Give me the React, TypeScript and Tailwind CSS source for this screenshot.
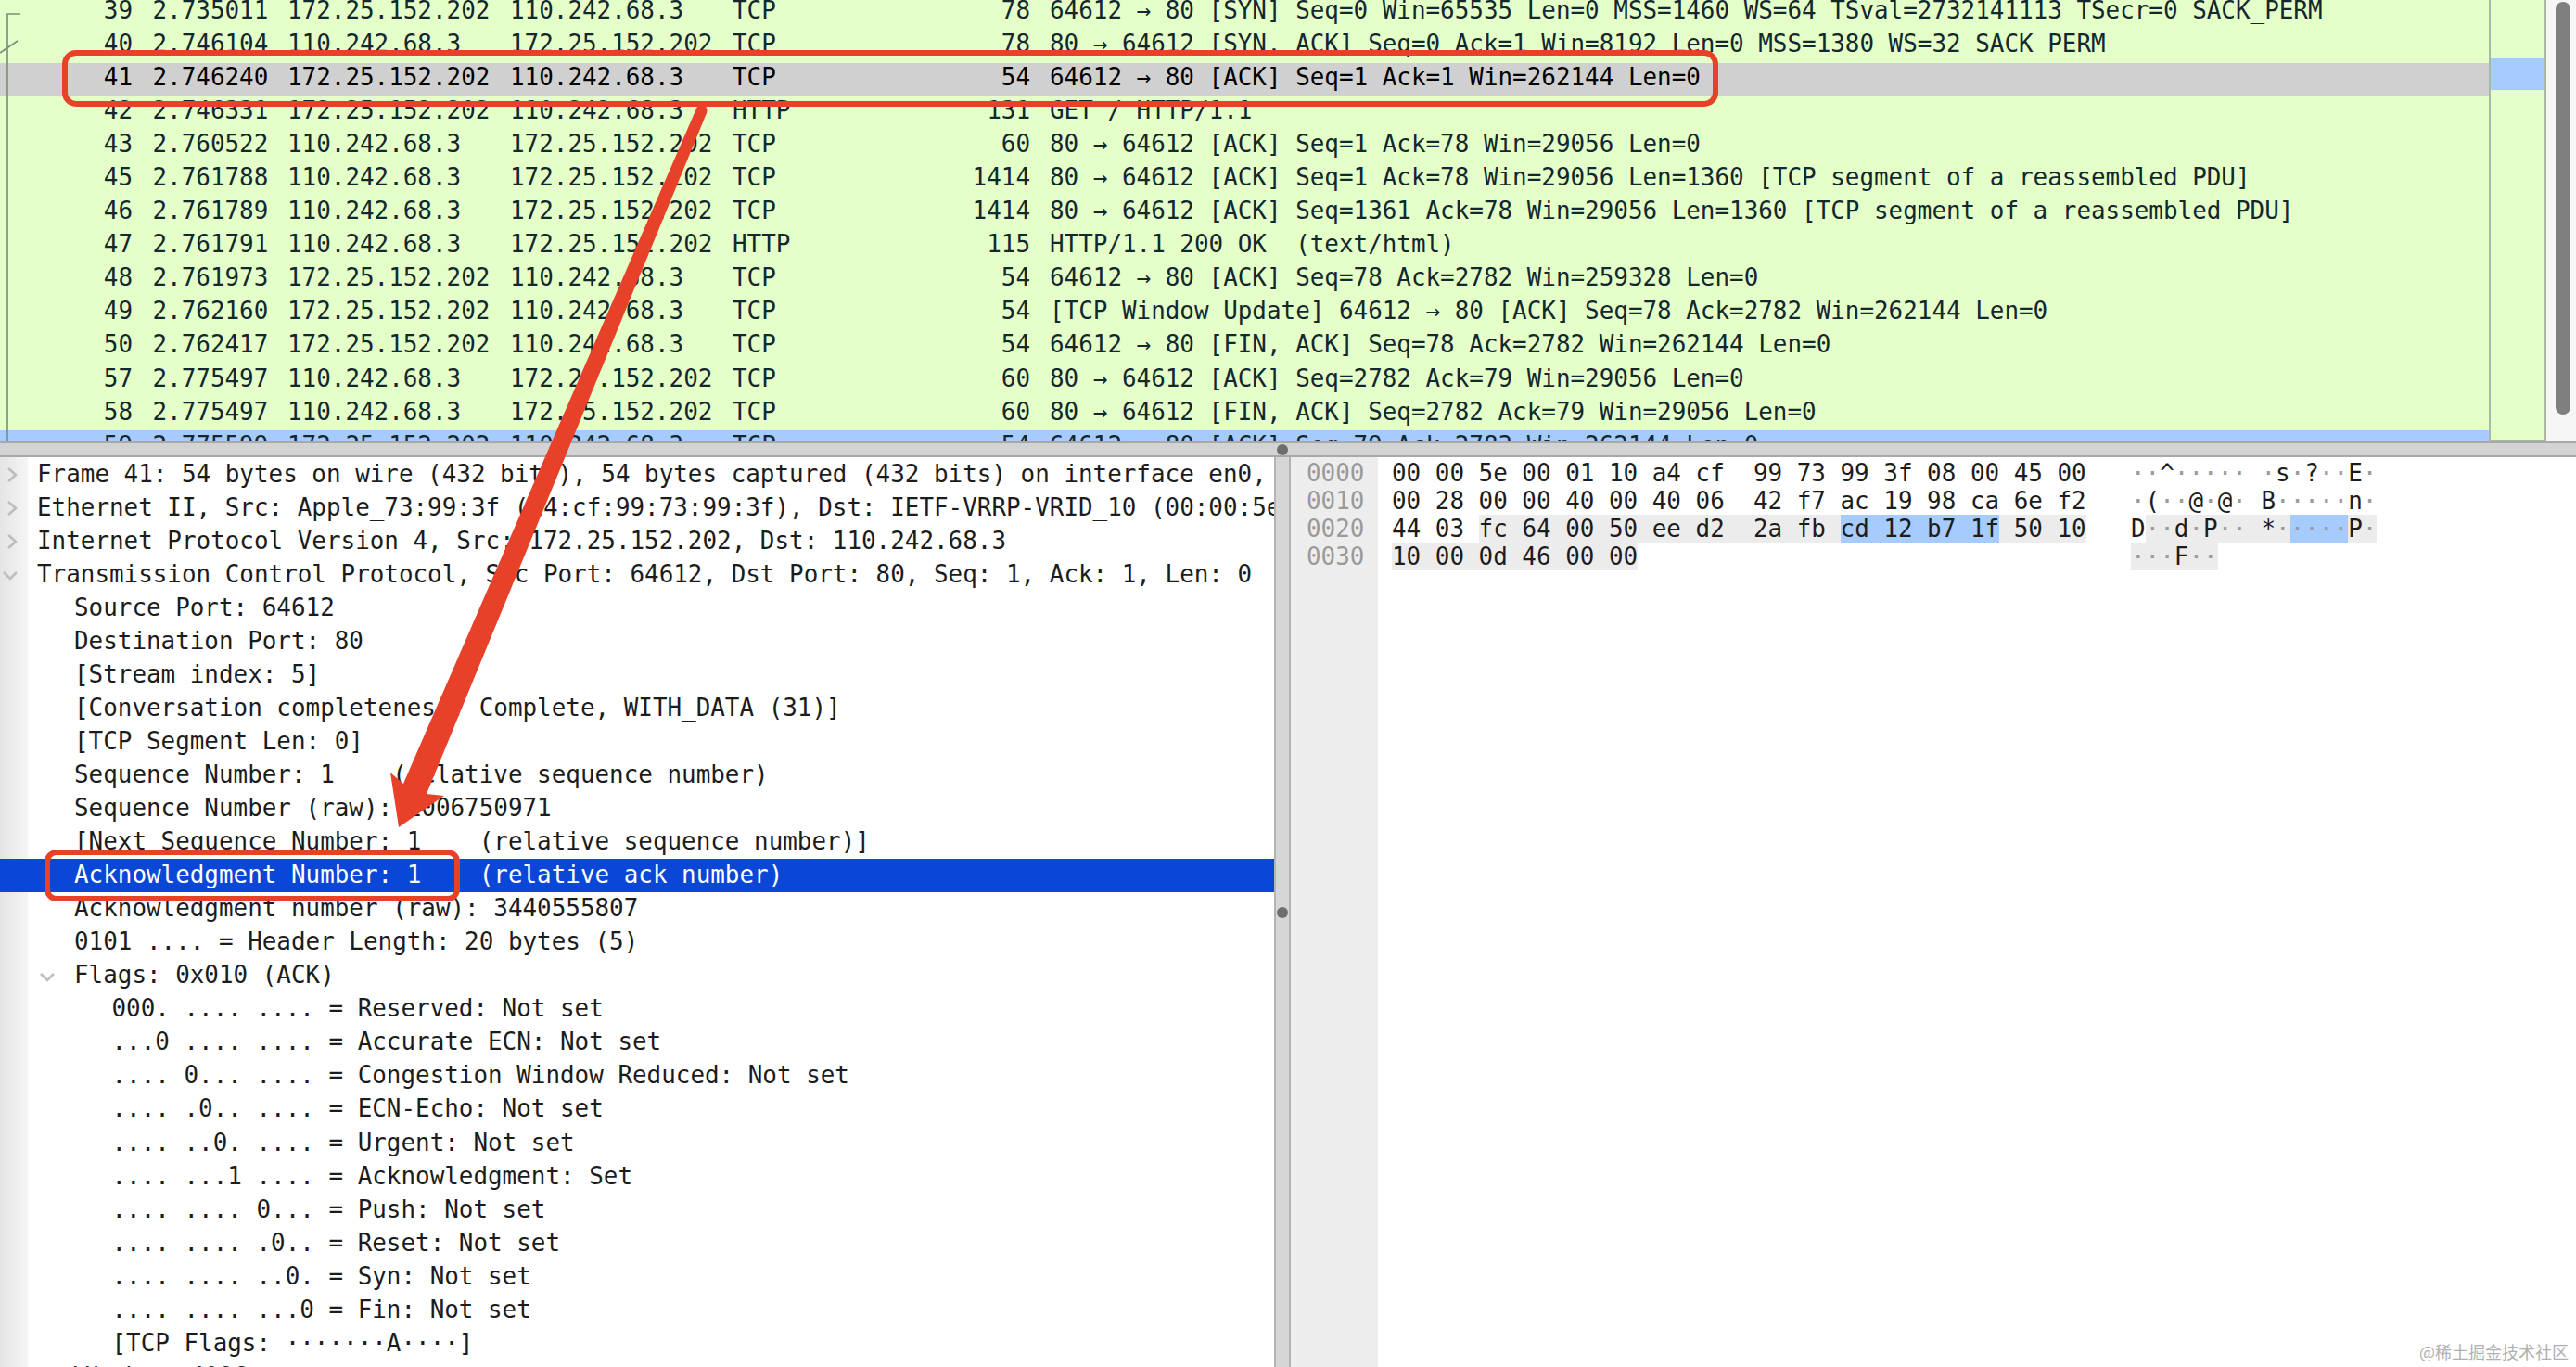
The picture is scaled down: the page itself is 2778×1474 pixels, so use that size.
import React from 'react'

interface Packet {
  no: string
  time: string
  src: string
  dst: string
  proto: string
  len: string
  info: string
  tone?: 'selected' | 'related'
}

const A = '172.25.152.202'
const B = '110.242.68.3'

const packets: Packet[] = [
  { no: '39', time: '2.735011', src: A, dst: B, proto: 'TCP', len: '78', info: '64612 → 80 [SYN] Seq=0 Win=65535 Len=0 MSS=1460 WS=64 TSval=2732141113 TSecr=0 SACK_PERM' },
  { no: '40', time: '2.746104', src: B, dst: A, proto: 'TCP', len: '78', info: '80 → 64612 [SYN, ACK] Seq=0 Ack=1 Win=8192 Len=0 MSS=1380 WS=32 SACK_PERM' },
  { no: '41', time: '2.746240', src: A, dst: B, proto: 'TCP', len: '54', info: '64612 → 80 [ACK] Seq=1 Ack=1 Win=262144 Len=0', tone: 'selected' },
  { no: '42', time: '2.746331', src: A, dst: B, proto: 'HTTP', len: '131', info: 'GET / HTTP/1.1' },
  { no: '43', time: '2.760522', src: B, dst: A, proto: 'TCP', len: '60', info: '80 → 64612 [ACK] Seq=1 Ack=78 Win=29056 Len=0' },
  { no: '45', time: '2.761788', src: B, dst: A, proto: 'TCP', len: '1414', info: '80 → 64612 [ACK] Seq=1 Ack=78 Win=29056 Len=1360 [TCP segment of a reassembled PDU]' },
  { no: '46', time: '2.761789', src: B, dst: A, proto: 'TCP', len: '1414', info: '80 → 64612 [ACK] Seq=1361 Ack=78 Win=29056 Len=1360 [TCP segment of a reassembled PDU]' },
  { no: '47', time: '2.761791', src: B, dst: A, proto: 'HTTP', len: '115', info: 'HTTP/1.1 200 OK  (text/html)' },
  { no: '48', time: '2.761973', src: A, dst: B, proto: 'TCP', len: '54', info: '64612 → 80 [ACK] Seq=78 Ack=2782 Win=259328 Len=0' },
  { no: '49', time: '2.762160', src: A, dst: B, proto: 'TCP', len: '54', info: '[TCP Window Update] 64612 → 80 [ACK] Seq=78 Ack=2782 Win=262144 Len=0' },
  { no: '50', time: '2.762417', src: A, dst: B, proto: 'TCP', len: '54', info: '64612 → 80 [FIN, ACK] Seq=78 Ack=2782 Win=262144 Len=0' },
  { no: '57', time: '2.775497', src: B, dst: A, proto: 'TCP', len: '60', info: '80 → 64612 [ACK] Seq=2782 Ack=79 Win=29056 Len=0' },
  { no: '58', time: '2.775497', src: B, dst: A, proto: 'TCP', len: '60', info: '80 → 64612 [FIN, ACK] Seq=2782 Ack=79 Win=29056 Len=0' },
  { no: '59', time: '2.775599', src: A, dst: B, proto: 'TCP', len: '54', info: '64612 → 80 [ACK] Seq=79 Ack=2783 Win=262144 Len=0', tone: 'related' },
]

// depth: 0 = top level with chevron, 1 = tcp field, 2 = flag bit
const tree: { text: string; depth: number; open?: boolean; selected?: boolean }[] = [
  { text: 'Frame 41: 54 bytes on wire (432 bits), 54 bytes captured (432 bits) on interface en0, id 0', depth: 0 },
  { text: 'Ethernet II, Src: Apple_73:99:3f (a4:cf:99:73:99:3f), Dst: IETF-VRRP-VRID_10 (00:00:5e:00:01:10)', depth: 0 },
  { text: 'Internet Protocol Version 4, Src: 172.25.152.202, Dst: 110.242.68.3', depth: 0 },
  { text: 'Transmission Control Protocol, Src Port: 64612, Dst Port: 80, Seq: 1, Ack: 1, Len: 0', depth: 0, open: true },
  { text: 'Source Port: 64612', depth: 1 },
  { text: 'Destination Port: 80', depth: 1 },
  { text: '[Stream index: 5]', depth: 1 },
  { text: '[Conversation completeness: Complete, WITH_DATA (31)]', depth: 1 },
  { text: '[TCP Segment Len: 0]', depth: 1 },
  { text: 'Sequence Number: 1    (relative sequence number)', depth: 1 },
  { text: 'Sequence Number (raw): 1006750971', depth: 1 },
  { text: '[Next Sequence Number: 1    (relative sequence number)]', depth: 1 },
  { text: 'Acknowledgment Number: 1    (relative ack number)', depth: 1, selected: true },
  { text: 'Acknowledgment number (raw): 3440555807', depth: 1 },
  { text: '0101 .... = Header Length: 20 bytes (5)', depth: 1 },
  { text: 'Flags: 0x010 (ACK)', depth: 1, open: true },
  { text: '000. .... .... = Reserved: Not set', depth: 2 },
  { text: '...0 .... .... = Accurate ECN: Not set', depth: 2 },
  { text: '.... 0... .... = Congestion Window Reduced: Not set', depth: 2 },
  { text: '.... .0.. .... = ECN-Echo: Not set', depth: 2 },
  { text: '.... ..0. .... = Urgent: Not set', depth: 2 },
  { text: '.... ...1 .... = Acknowledgment: Set', depth: 2 },
  { text: '.... .... 0... = Push: Not set', depth: 2 },
  { text: '.... .... .0.. = Reset: Not set', depth: 2 },
  { text: '.... .... ..0. = Syn: Not set', depth: 2 },
  { text: '.... .... ...0 = Fin: Not set', depth: 2 },
  { text: '[TCP Flags: ·······A····]', depth: 2 },
  { text: 'Window: 4096', depth: 1 },
]

type Tone = 'plain' | 'field' | 'hit'
type Seg = [string, Tone]

const offsets = ['0000', '0010', '0020', '0030']

const hexLines: Seg[][] = [
  [['00 00 5e 00 01 10 a4 cf  99 73 99 3f 08 00 45 00', 'plain']],
  [['00 28 00 00 40 00 40 06  42 f7 ac 19 98 ca 6e f2', 'plain']],
  [['44 03 ', 'plain'], ['fc 64 00 50 ee d2  2a fb ', 'field'], ['cd 12 b7 1f', 'hit'], [' 50 10', 'field']],
  [['10 00 0d 46 00 00', 'field']],
]

const asciiLines: Seg[][] = [
  [['··^····· ·s·?··E·', 'plain']],
  [['·(··@·@· B·····n·', 'plain']],
  [['D', 'plain'], ['··d·P·· *·', 'field'], ['····', 'hit'], ['P·', 'field']],
  [['···F··', 'field']],
]

const toneClass: Record<Tone, string> = {
  plain: '',
  field: 'bg-[#ececec]',
  hit: 'bg-[#a5cbff]',
}

const Chevron = ({ open, className }: { open?: boolean; className: string }) => (
  <svg viewBox="0 0 20 20" className={className} fill="none" stroke="#bdbdbd" strokeWidth="2.6">
    {open ? <path d="M3 7l7 7 7-7" /> : <path d="M6 3l8 7-8 7" />}
  </svg>
)

const PacketRow = ({ p }: { p: Packet }) => (
  <div
    className={`grid h-[36.05px] shrink-0 grid-cols-[143px_167px_240px_240px_140px_181px_1fr] items-center pb-[5px] leading-[22px] whitespace-pre text-[#12272e] ${
      p.tone === 'selected' ? 'bg-[#d0d0d0] text-black' : p.tone === 'related' ? 'bg-[#a5cbff]' : ''
    }`}
  >
    <span className="text-right">{p.no}</span>
    <span className="pl-[21.5px]">{p.time}</span>
    <span>{p.src}</span>
    <span>{p.dst}</span>
    <span>{p.proto}</span>
    <span className="text-right">{p.len}</span>
    <span className="pl-[21px]">{p.info}</span>
  </div>
)

const TreeRow = ({ row }: { row: (typeof tree)[number] }) => {
  const indent = row.depth === 2 ? 'pl-[120.5px]' : 'pl-[80px]'
  return (
    <div
      className={`relative flex h-[36.05px] shrink-0 items-center whitespace-pre ${
        row.depth === 0 ? 'pl-[40px]' : indent
      } ${row.selected ? 'bg-[#0a47d6] text-white' : 'text-[#1c1c1c]'}`}
    >
      {row.depth === 0 && (
        <Chevron open={row.open} className={`absolute top-[9px] h-[20px] w-[20px] ${row.open ? 'left-[1px]' : 'left-[3px]'}`} />
      )}
      {row.depth === 1 && row.open && <Chevron open className="absolute top-[9px] left-[41px] h-[20px] w-[20px]" />}
      {row.text}
    </div>
  )
}

const DumpLine = ({ segs, dots }: { segs: Seg[]; dots?: boolean }) => (
  <div className="h-[30px] leading-[30px] whitespace-pre text-[#1c1c1c]">
    {segs.map(([text, tone], i) => (
      <span key={i} className={`inline-block h-[30px] align-top ${toneClass[tone]}`}>
        {dots
          ? text.split('').map((c, j) =>
              c === '·' ? (
                <span key={j} className="text-[#9a9a9a]">
                  {c}
                </span>
              ) : (
                c
              )
            )
          : text}
      </span>
    ))}
  </div>
)

export default function App() {
  return (
    <div className="relative flex h-[1474px] w-[2778px] flex-col overflow-hidden bg-white font-['DejaVu_Sans_Mono',monospace] text-[25.92px]">
      {/* packet list */}
      <div className="flex h-[476px] shrink-0">
        <div className="relative w-[2684px] shrink-0 overflow-hidden bg-[#e4ffc7]">
          <div className="-mt-[4.5px] flex flex-col">
            {packets.map(p => (
              <PacketRow key={p.no} p={p} />
            ))}
          </div>
          <svg className="absolute top-0 left-0 h-[476px] w-[30px]" viewBox="0 0 30 476" fill="none" stroke="#7d8a7f" strokeWidth="1.6">
            <path d="M22 15H8V476" />
            <path d="M0 57L19 44" />
          </svg>
        </div>
        <div className="w-[62px] shrink-0 border-x-2 border-b-2 border-[#a9b8a3] bg-[#e4ffc7] pt-[63px]">
          <div className="h-[34px] bg-[#a5cbff]" />
        </div>
        <div className="flex-1 bg-[#f6f6f6] pt-[2px] pl-[10px]">
          <div className="h-[445px] w-4 rounded-full bg-[#7f7f7f]" />
        </div>
      </div>

      {/* horizontal splitter */}
      <div className="flex h-[17px] shrink-0 items-center border-y-2 border-[#a8a8a8] bg-[#d3d3d3] pl-[1377px]">
        <div className="h-3 w-3 rounded-full bg-[#6e6e6e]" />
      </div>

      <div className="flex min-h-0 flex-1">
        {/* packet details */}
        <div className="flex w-[1374px] shrink-0 flex-col overflow-hidden bg-[linear-gradient(to_right,#e4e4e4_0,#f5f5f5_30px,#ffffff_30px)]">
          {tree.map((row, i) => (
            <TreeRow key={i} row={row} />
          ))}
        </div>

        {/* vertical splitter */}
        <div className="flex w-[18px] shrink-0 items-center justify-center border-x-2 border-[#b4b4b4] bg-[#d6d6d6]">
          <div className="h-3 w-3 shrink-0 rounded-full bg-[#6e6e6e]" />
        </div>

        {/* packet bytes */}
        <div className="flex min-w-0 flex-1 bg-white">
          <div className="w-[94px] shrink-0 bg-[#ededed] pt-[2px] pl-[17px] text-[#9a9a9a]">
            {offsets.map(o => (
              <div key={o} className="h-[30px] leading-[30px]">
                {o}
              </div>
            ))}
          </div>
          <div className="w-[812px] shrink-0 pt-[2px] pl-[15px]">
            {hexLines.map((segs, i) => (
              <DumpLine key={i} segs={segs} />
            ))}
          </div>
          <div className="pt-[2px]">
            {asciiLines.map((segs, i) => (
              <DumpLine key={i} segs={segs} dots />
            ))}
          </div>
        </div>
      </div>

      {/* red annotations over the capture */}
      <svg className="pointer-events-none absolute top-0 left-0 h-[1474px] w-[2778px]" viewBox="0 0 2778 1474" fill="none">
        <rect x="70" y="57" width="1780" height="55" rx="12" stroke="#e8412a" strokeWidth="6" />
        <rect x="51" y="919" width="442" height="50" rx="10" stroke="#e8412a" strokeWidth="6" />
        <path
          d="M751 117 L435 845 L421 833 L430 892 L479 858 L460 856 L762 122 Q764 115 758 113 Q753 112 751 117 Z"
          fill="#e8412a"
        />
      </svg>

      <div className="absolute right-[8px] bottom-[6px] font-['Noto_Sans_CJK_SC',sans-serif] text-[18px] leading-[22px] text-[#b0b0b0]">
        @稀土掘金技术社区
      </div>
    </div>
  )
}
